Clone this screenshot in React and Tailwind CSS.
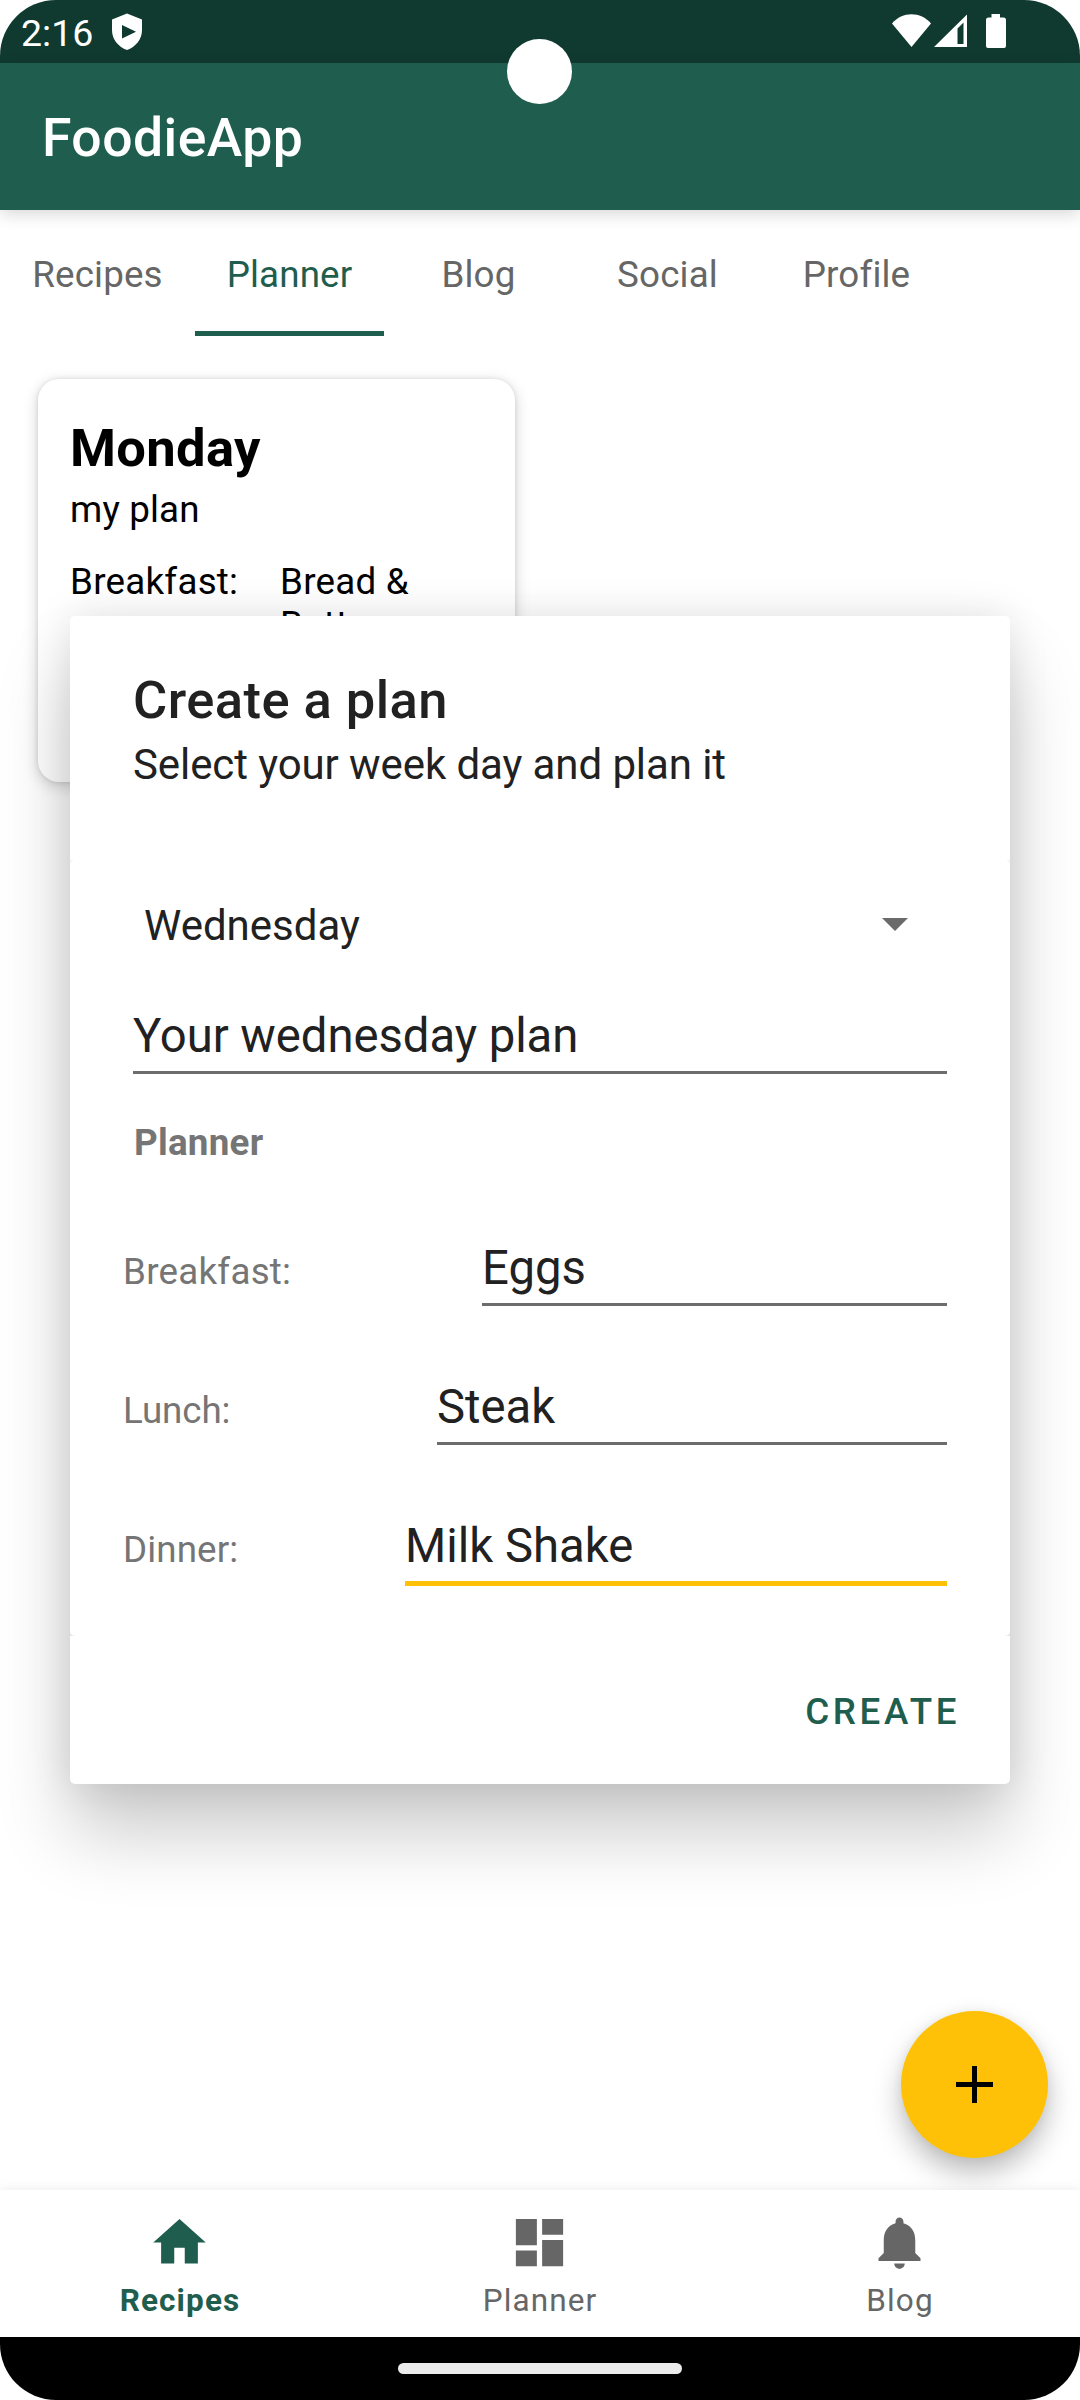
const tabs = [
  { label: "Recipes", width: "w-[195px]" },
  { label: "Planner", width: "w-[189px]", active: true },
  { label: "Blog", width: "w-[189px]" },
  { label: "Social", width: "w-[189px]" },
  { label: "Profile", width: "w-[189px]" },
];

const meals = [
  { label: "Breakfast:", value: "Eggs", width: "w-[465px]", spacing: "tracking-[0.25px]" },
  { label: "Lunch:", value: "Steak", width: "w-[510px]", spacing: "tracking-[-0.1px]" },
  { label: "Dinner:", value: "Milk Shake", width: "w-[542px]", spacing: "tracking-[0.1px]", focused: true },
];

const navItems = [
  { label: "Recipes", active: true, path: "M10 20v-6h4v6h5v-8h3L12 3 2 12h3v8z" },
  { label: "Planner", path: "M3 13h8V3H3v10zm0 8h8v-6H3v6zm10 0h8V11h-8v10zm0-18v6h8V3h-8z" },
  {
    label: "Blog",
    path: "M12 22c1.1 0 2-.9 2-2h-4c0 1.1.89 2 2 2zm6-6v-5c0-3.07-1.64-5.64-4.5-6.32V4c0-.83-.67-1.5-1.5-1.5s-1.5.67-1.5 1.5v.68C7.63 5.36 6 7.92 6 11v5l-2 2v1h16v-1l-2-2z",
  },
];

function StatusBar() {
  return (
    <div className="flex h-[63px] shrink-0 items-start bg-[#103a30] text-white">
      <div className="ml-[21px] mt-[11px] w-[91px] text-[37.5px] leading-[44px]">2:16</div>
      <svg className="mt-[13px] h-[37px] w-[30px]" viewBox="0 0 30 37" fill="currentColor">
        <path fillRule="evenodd" d="M15 .5 30 6.500V17c0 9.500-6.500 17-15 20C6.500 34 0 26.500 0 17V6.500ZM10 12v13.500l14-6.700Z" />
      </svg>
      <svg className="ml-auto mr-[73px] mt-[14px] h-[36px] w-[115px]" viewBox="0 0 115 36" fill="currentColor">
        <path d="M0 9.500C10.500-2.800 28.500-2.800 39 9.500L19.500 33Z" />
        <path fillRule="evenodd" d="M42 33 75 .5V33ZM65.500 14.500V30H71.500V8.500Z" />
        <path d="M99.500 0h8.500v3.500h3.500a2.500 2.500 0 0 1 2.500 2.500v26a2 2 0 0 1-2 2h-16a2 2 0 0 1-2-2V6a2.500 2.500 0 0 1 2.500-2.500h3Z" />
      </svg>
    </div>
  );
}

function PlanCard() {
  return (
    <div className="ml-[38px] mt-[43px] h-[403px] w-[477px] rounded-[21px] bg-white px-[32px] pt-[39px] text-black shadow-[0_4px_15px_rgba(0,0,0,0.18),0_0_5px_rgba(0,0,0,0.1)]">
      <div className="text-[52.5px] font-bold leading-[60px] tracking-[0.35px]">Monday</div>
      <div className="mt-[10px] text-[36.75px] leading-[44px] tracking-[0.15px]">my plan</div>
      <div className="mt-[28px] flex text-[36.75px] leading-[43px] tracking-[0.25px]">
        <div className="w-[210px]">Breakfast:</div>
        <div className="w-[170px]">Bread &amp; Butter</div>
      </div>
    </div>
  );
}

function MealRow({ meal }) {
  return (
    <div className="flex h-[139px] items-start justify-between pl-[53px] pr-[63px]">
      <div className={`${meal.spacing} mt-[10px] text-[36.75px] leading-[44px] text-[#757575]`}>{meal.label}</div>
      <div
        className={`${meal.width} ${
          meal.focused ? "border-b-[5px] border-[#ffc107]" : "border-b-[3px] border-[#6c6c6c]"
        } pb-[7px] text-[47.25px] leading-[56px]`}
      >
        {meal.value}
      </div>
    </div>
  );
}

function PlanDialog() {
  return (
    <div className="absolute left-[70px] top-[616px] h-[1168px] w-[940px] rounded-[5px] bg-white text-[#212121] shadow-[0_50px_75px_rgba(0,0,0,0.2),0_0_42px_rgba(0,0,0,0.11)]">
      <div className="h-[244px] px-[63px] pt-[54px]">
        <div className="text-[52.5px] font-medium leading-[60px] tracking-[0.45px]">Create a plan</div>
        <div className="mt-[10px] text-[42px] leading-[50px] tracking-[-0.09px]">Select your week day and plan it</div>
      </div>
      <div className="bg-[linear-gradient(#f3f3f3,#f3f3f3),linear-gradient(#e6e6e6,#e6e6e6)] bg-[length:100%_5px,100%_5px] bg-[position:top,bottom] bg-no-repeat">
        <div className="flex h-[776px] flex-col rounded-[5px] bg-white">
          <div className="mt-[41px] flex items-center pl-[74px] pr-[102px] text-[42px] leading-[50px]">
            <div>Wednesday</div>
            <svg className="mb-[3px] ml-auto h-[13px] w-[26px]" viewBox="0 0 26 13">
              <path d="M0 0h26L13 13z" fill="#6a6a6a" />
            </svg>
          </div>
          <div className="mx-[63px] mt-[57px] border-b-[3px] border-[#6c6c6c] pb-[7px] text-[47.25px] leading-[56px] tracking-[-0.05px]">
            Your wednesday plan
          </div>
          <div className="ml-[64px] mt-[47px] text-[36.75px] font-bold leading-[44px] tracking-[0.25px] text-[#757575]">Planner</div>
          <div className="mt-[75px] flex flex-col">
            {meals.map((meal) => (
              <MealRow key={meal.label} meal={meal} />
            ))}
          </div>
        </div>
      </div>
      <div className="flex justify-end pr-[50px] pt-[54px] text-[36.75px] font-medium leading-[44px] tracking-[3.6px] text-[#1f5e4e]">
        CREATE
      </div>
    </div>
  );
}

function BottomNav() {
  return (
    <div className="relative flex h-[147px] shrink-0 bg-white shadow-[0_0_12px_rgba(0,0,0,0.08)]">
      {navItems.map((item) => (
        <div
          key={item.label}
          className={`flex flex-1 flex-col items-center pt-[21px] ${
            item.active ? "font-bold text-[#1f5e4e]" : "text-[#666666]"
          }`}
        >
          <svg className="mr-[2px] h-[63px] w-[63px]" viewBox="0 0 24 24" fill="currentColor">
            <path d={item.path} />
          </svg>
          <div className="mt-[8px] text-[31.5px] leading-[38px] tracking-[1.1px]">{item.label}</div>
        </div>
      ))}
    </div>
  );
}

export default function App() {
  return (
    <div className="h-[2400px] w-[1080px] bg-white">
      <div className="relative flex h-full w-full flex-col overflow-hidden rounded-[56px] bg-white font-['Roboto',sans-serif]">
        <StatusBar />
        <div className="relative flex h-[147px] shrink-0 items-center bg-[#1f5e4e] pl-[42px] text-[53.5px] font-medium leading-[60px] tracking-[0.45px] text-white shadow-[0_4px_16px_rgba(0,0,0,0.16)]">
          <div className="mt-[3px]">FoodieApp</div>
        </div>
        <div className="absolute left-[507px] top-[39px] h-[65px] w-[65px] rounded-full bg-white" />
        <div className="flex h-[126px] shrink-0 text-[36.75px] leading-[44px] tracking-[0.15px]">
          {tabs.map((tab) => (
            <div
              key={tab.label}
              className={`${tab.width} flex justify-center border-b-[5px] pt-[43px] ${
                tab.active ? "border-[#1f5e4e] text-[#1f5e4e]" : "border-transparent text-[#666666]"
              }`}
            >
              {tab.label}
            </div>
          ))}
        </div>
        <div className="flex-1">
          <PlanCard />
        </div>
        <PlanDialog />
        <button
          aria-label="Add plan"
          className="absolute left-[901px] top-[2011px] flex h-[147px] w-[147px] items-center justify-center rounded-full bg-[#ffc107] shadow-[0_15px_28px_rgba(0,0,0,0.26),0_0_12px_rgba(0,0,0,0.06)]"
        >
          <svg className="h-[37px] w-[37px]" viewBox="0 0 37 37">
            <path d="M18.500 0v37M0 18.500h37" stroke="#000" strokeWidth="5" />
          </svg>
        </button>
        <BottomNav />
        <div className="flex h-[63px] shrink-0 items-center justify-center bg-black">
          <div className="h-[11px] w-[284px] rounded-full bg-[#ebebeb]" />
        </div>
      </div>
    </div>
  );
}
